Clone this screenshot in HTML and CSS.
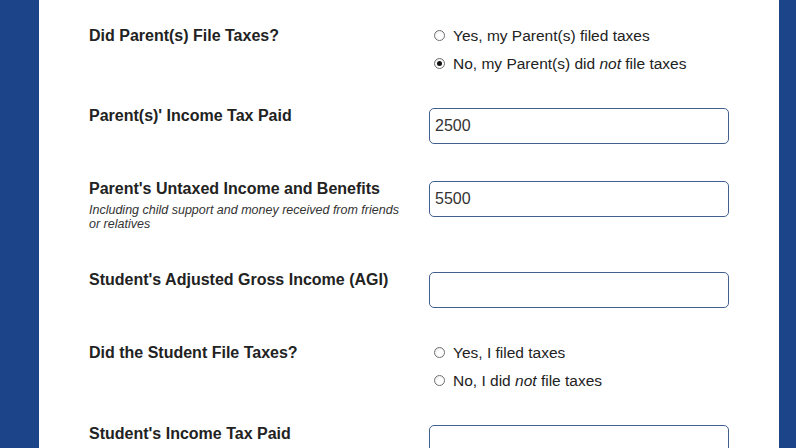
FILE: index.html
```html
<!DOCTYPE html>
<html>
<head>
<meta charset="utf-8">
<link rel="stylesheet" href="styles.css">
</head>
<body>
<div class="page">
  <div class="panel">
    <form class="form">
      <div class="row row-1">
        <div class="label label-radio">Did Parent(s) File Taxes?</div>
        <div class="radios">
          <label class="radio"><input type="radio" name="ptax"><span>Yes, my Parent(s) filed taxes</span></label>
          <label class="radio"><input type="radio" name="ptax" checked><span>No, my Parent(s) did <em>not</em> file taxes</span></label>
        </div>
      </div>
      <div class="row row-2">
        <div class="label">Parent(s)' Income Tax Paid</div>
        <input class="field" type="text" value="2500">
      </div>
      <div class="row row-3">
        <div class="label">Parent's Untaxed Income and Benefits
          <div class="sub">Including child support and money received from friends or relatives</div>
        </div>
        <input class="field" type="text" value="5500">
      </div>
      <div class="row row-4">
        <div class="label">Student's Adjusted Gross Income (AGI)</div>
        <input class="field" type="text" value="">
      </div>
      <div class="row row-5">
        <div class="label label-radio">Did the Student File Taxes?</div>
        <div class="radios">
          <label class="radio"><input type="radio" name="stax"><span>Yes, I filed taxes</span></label>
          <label class="radio"><input type="radio" name="stax"><span>No, I did <em>not</em> file taxes</span></label>
        </div>
      </div>
      <div class="row row-6">
        <div class="label">Student's Income Tax Paid</div>
        <input class="field field-6" type="text" value="">
      </div>
    </form>
  </div>
</div>
</body>
</html>
```

FILE: styles.css
```css
html, body {
  margin: 0;
  padding: 0;
  height: 100%;
  overflow: hidden;
}
body {
  background: #1b4588;
  font-family: "Liberation Sans", Arial, sans-serif;
  color: #222;
}
.page {
  display: flex;
  height: 100%;
  padding-left: 39px;
}
.panel {
  width: 740px;
  background: #fff;
  height: 100%;
}
.form {
  padding-left: 50px;
  padding-top: 22px;
}
.row {
  display: grid;
  grid-template-columns: 340px 300px;
  align-items: start;
}
.row-2 { margin-top: 27px; }
.row-3 { margin-top: 34px; }
.row-4 { margin-top: 38px; }
.row-5 { margin-top: 31px; }
.row-6 { margin-top: 28px; }

.label {
  font-size: 16px;
  font-weight: bold;
  line-height: 18px;
  padding-top: 2px;
  width: 318px;
  color: #222;
}
.label-radio {
  padding-top: 5px;
}
.sub {
  font-size: 12.5px;
  font-weight: normal;
  font-style: italic;
  line-height: 14px;
  margin-top: 5px;
  color: #333;
}
.radios {
  display: flex;
  flex-direction: column;
}
.radio {
  display: flex;
  align-items: center;
  height: 28px;
  font-size: 15.5px;
  color: #222;
}
.radio input {
  appearance: none;
  -webkit-appearance: none;
  width: 11px;
  height: 11px;
  margin: -1px 8px 0 5px;
  border: 1px solid #6e6e6e;
  border-radius: 50%;
  background: radial-gradient(circle at 60% 65%, #ffffff 40%, #e4e4e4 100%);
  box-sizing: border-box;
  position: relative;
  flex: none;
}
.radio input:checked::after {
  content: "";
  position: absolute;
  left: 2px;
  top: 2px;
  width: 5px;
  height: 5px;
  border-radius: 50%;
  background: #111;
}
.field {
  width: 300px;
  height: 36px;
  box-sizing: border-box;
  border: 1px solid #41608e;
  border-radius: 5px;
  padding: 0 5px;
  margin: 3px 0 0 0;
  font-family: "Liberation Sans", Arial, sans-serif;
  font-size: 16px;
  color: #333;
  background: #fff;
  outline: none;
}
.field-6 {
  margin-top: 2px;
}
```
